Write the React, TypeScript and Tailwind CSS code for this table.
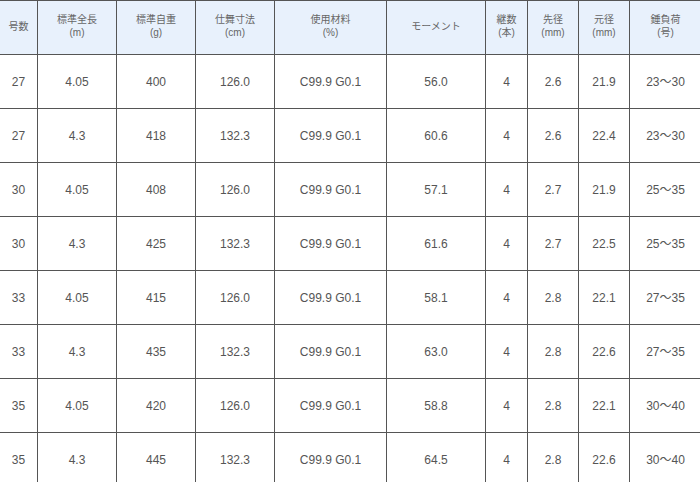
import React from "react";

const columns = [
  { w: 38, lines: ["号数"] },
  { w: 79, lines: ["標準全長", "(m)"] },
  { w: 79, lines: ["標準自重", "(g)"] },
  { w: 79, lines: ["仕舞寸法", "(cm)"] },
  { w: 112, lines: ["使用材料", "(%)"] },
  { w: 99, lines: ["モーメント"] },
  { w: 42, lines: ["継数", "(本)"] },
  { w: 51, lines: ["先径", "(mm)"] },
  { w: 51, lines: ["元径", "(mm)"] },
  { w: 72, lines: ["錘負荷", "(号)"] },
];

const rows = [
  ["27", "4.05", "400", "126.0", "C99.9 G0.1", "56.0", "4", "2.6", "21.9", "23〜30"],
  ["27", "4.3", "418", "132.3", "C99.9 G0.1", "60.6", "4", "2.6", "22.4", "23〜30"],
  ["30", "4.05", "408", "126.0", "C99.9 G0.1", "57.1", "4", "2.7", "21.9", "25〜35"],
  ["30", "4.3", "425", "132.3", "C99.9 G0.1", "61.6", "4", "2.7", "22.5", "25〜35"],
  ["33", "4.05", "415", "126.0", "C99.9 G0.1", "58.1", "4", "2.8", "22.1", "27〜35"],
  ["33", "4.3", "435", "132.3", "C99.9 G0.1", "63.0", "4", "2.8", "22.6", "27〜35"],
  ["35", "4.05", "420", "126.0", "C99.9 G0.1", "58.8", "4", "2.8", "22.1", "30〜40"],
  ["35", "4.3", "445", "132.3", "C99.9 G0.1", "64.5", "4", "2.8", "22.6", "30〜40"],
];

export default function App() {
  return (
    <div className="w-[700px] h-[482px] overflow-hidden bg-white">
      <table
        className="-ml-px w-[702px] min-w-[702px] border-collapse table-fixed text-[#555]"
        style={{ fontFamily: '"Liberation Sans", "Noto Sans CJK JP", sans-serif' }}
      >
        <colgroup>
          {columns.map((c, i) => (
            <col key={i} style={{ width: c.w }} />
          ))}
        </colgroup>
        <thead>
          <tr className="h-[54px] bg-[#e8f1fc]">
            {columns.map((c, i) => (
              <th
                key={i}
                className="border border-[#555] px-0 pb-[3px] text-center align-middle text-[10px] font-normal leading-[13px] text-[#666]"
              >
                {c.lines.map((l) => (
                  <div key={l}>{l}</div>
                ))}
              </th>
            ))}
          </tr>
        </thead>
        <tbody>
          {rows.map((r, ri) => (
            <tr key={ri} className="h-[54px]">
              {r.map((v, ci) => (
                <td
                  key={ci}
                  className="border border-[#555] px-0 text-center align-middle text-[12px] leading-[14px]"
                >
                  {v}
                </td>
              ))}
            </tr>
          ))}
        </tbody>
      </table>
    </div>
  );
}
